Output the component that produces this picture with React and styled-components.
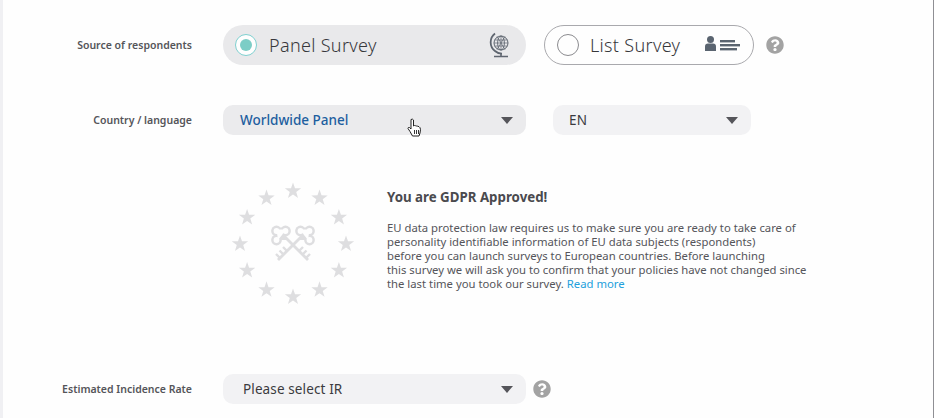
import React from "react";
import styled, { createGlobalStyle } from "styled-components";
import { FaQuestionCircle } from "react-icons/fa";

const Global = createGlobalStyle`
  html, body { margin: 0; padding: 0; background: #fefefe; }
  body { font-family: "Noto Sans", "Open Sans", sans-serif; }
`;

const Page = styled.div`
  width: 934px;
  height: 418px;
  box-sizing: border-box;
  overflow: hidden;
  padding-top: 25px;
  background: #fefefe;
  border-left: 3px solid #f0f0f3;
  border-right: 1px solid #8f8f94;
`;

const Row = styled.div`
  display: grid;
  grid-template-columns: 189px auto;
  column-gap: 31px;
  align-items: center;
  justify-content: start;
  margin-top: ${(p) => p.$top || 0}px;
`;

const Label = styled.label`
  font-size: 10.5px;
  font-weight: 600;
  color: #55555a;
  text-align: right;
  white-space: nowrap;
`;

const Controls = styled.div`
  display: flex;
  align-items: center;
`;

const Pill = styled.div`
  box-sizing: border-box;
  width: ${(p) => p.$w}px;
  height: 40px;
  margin-right: ${(p) => p.$right || 0}px;
  display: flex;
  align-items: center;
  padding: 0 ${(p) => p.$pr}px 0 ${(p) => p.$pl}px;
  border-radius: 20px;
  background: ${(p) => (p.$on ? "#e9e9eb" : "#fefefe")};
  border: ${(p) => (p.$on ? "none" : "1px solid #a9a9ad")};
`;

const Radio = styled.span`
  box-sizing: border-box;
  width: 22px;
  height: 22px;
  flex: none;
  border-radius: 50%;
  display: flex;
  align-items: center;
  justify-content: center;
  background: #fefefe;
  border: 1px solid ${(p) => (p.$on ? "#7fd0d0" : "#8b8b8f")};

  &::after {
    content: "";
    display: ${(p) => (p.$on ? "block" : "none")};
    width: 12px;
    height: 12px;
    border-radius: 50%;
    background: #7ccdc6;
  }
`;

const PillText = styled.span`
  flex: 1;
  margin-left: ${(p) => p.$gap}px;
  font-size: 18px;
  letter-spacing: 0.32px;
  font-weight: 300;
  color: #37373b;
  white-space: nowrap;
`;

const Help = styled(FaQuestionCircle)`
  width: 18px;
  height: 18px;
  color: #a3a3a3;
  flex: none;
`;

const Select = styled.div`
  position: relative;
  box-sizing: border-box;
  width: ${(p) => p.$w}px;
  height: 30px;
  margin-right: ${(p) => p.$right || 0}px;
  padding: 0 13px 0 ${(p) => p.$pl}px;
  display: flex;
  align-items: center;
  justify-content: space-between;
  border-radius: 10px;
  background: ${(p) => (p.$dark ? "#ebebed" : "#f2f2f4")};
  font-size: 13.5px;
  letter-spacing: ${(p) => (p.$blue ? 0 : 0.12)}px;
  font-weight: ${(p) => (p.$blue ? 500 : 400)};
  color: ${(p) => (p.$blue ? "#1d5e9f" : "#3a3a3e")};
`;

const Caret = styled.span`
  width: 0;
  height: 0;
  border-left: 6.5px solid transparent;
  border-right: 6.5px solid transparent;
  border-top: 7px solid #55555a;
`;

const Cursor = styled.svg`
  position: absolute;
  left: 184px;
  top: 13px;
  width: 17px;
  height: 20px;
`;

const Gdpr = styled.section`
  display: flex;
  align-items: flex-start;
  margin: 47px 0 0 229px;
`;

const Emblem = styled.svg`
  width: 124px;
  height: 124px;
  flex: none;
`;

const Copy = styled.div`
  margin: 7px 0 0 31px;
  color: #55555a;
`;

const Title = styled.h3`
  margin: 0 0 15px;
  font-size: 13.3px;
  line-height: 17px;
  font-weight: 700;
  color: #4a4a4e;
`;

const Text = styled.p`
  margin: 0;
  font-size: 11.3px;
  line-height: 14px;
  white-space: nowrap;
`;

const More = styled.a`
  color: #22a0dc;
`;

const Star = ({ cx, cy }) => {
  const pts = [];
  for (let i = 0; i < 10; i++) {
    const r = i % 2 ? 3.4 : 8.6;
    const a = (Math.PI / 5) * i - Math.PI / 2;
    pts.push(`${(cx + r * Math.cos(a)).toFixed(2)},${(cy + r * Math.sin(a)).toFixed(2)}`);
  }
  return <polygon points={pts.join(" ")} fill="#dedee0" />;
};

// one key of the crossed pair, the other is its mirror image
const Key = ({ flip }) => (
  <g transform={flip ? "translate(122 0) scale(-1 1)" : undefined}>
    <g fill="#dedee0">
      <circle cx="44.5" cy="49" r="5.4" />
      <circle cx="53.5" cy="49" r="5.4" />
      <circle cx="44.5" cy="58" r="5.4" />
      <rect x="46" y="50" width="8" height="8" />
    </g>
    <g fill="#fefefe">
      <circle cx="44.5" cy="49" r="2.9" />
      <circle cx="53.500" cy="49" r="2.9" />
      <circle cx="44.500" cy="58" r="2.9" />
      <path d="M44.500 47.500 L53.500 47.500 L50 53 L46 58 Z" />
    </g>
    <g fill="none" stroke="#dedee0">
      <path d="M52 54 L76 78" strokeWidth="2.8" />
      <path d="M67 69 L71 65 M70.500 72.500 L74.500 68.500 M74 76 L78 72" strokeWidth="2.4" />
    </g>
  </g>
);

const App = () => {
  const stars = Array.from({ length: 12 }, (_, i) => {
    const a = (Math.PI / 6) * i;
    return { cx: 61 + 53 * Math.cos(a), cy: 62 + 53 * Math.sin(a) };
  });

  return (
    <Page>
      <Global />
      <Row>
        <Label>Source of respondents</Label>
        <Controls>
          <Pill $on $w={303} $right={18} $pl={12} $pr={15}>
            <Radio $on />
            <PillText $gap={12}>Panel Survey</PillText>
            <svg width="22" height="26" viewBox="0 0 22 26" fill="none" stroke="#5f6670">
              <circle cx="12" cy="11" r="7" strokeWidth="1" />
              <ellipse cx="12" cy="11" rx="3.4" ry="7" strokeWidth="0.9" />
              <path d="M5.500 8h13M5 11h14M5.500 14h13M12 4v14M8 4.500l8 13M16 4.500l-8 13" strokeWidth="0.7" />
              <path d="M6 1.500A11 11 0 0 0 6 19a10 10 0 0 0 7 2.600" strokeWidth="1.800" />
              <path d="M12 21v3M5 24.500h14" strokeWidth="1.600" />
            </svg>
          </Pill>
          <Pill $w={210} $right={12} $pl={12} $pr={12}>
            <Radio />
            <PillText $gap={11}>List Survey</PillText>
            <svg width="38" height="18" viewBox="0 0 38 18" fill="#5a6470">
              <circle cx="7.500" cy="3.500" r="3.500" />
              <path d="M2 15v-4.500q0-3 3-3h5q3 0 3 3V15z" />
              <rect x="17" y="4" width="15" height="2.400" />
              <rect x="17" y="8" width="20" height="2.400" />
              <rect x="17" y="12" width="17" height="2.400" />
            </svg>
          </Pill>
          <Help />
        </Controls>
      </Row>

      <Row $top={40}>
        <Label>Country / language</Label>
        <Controls>
          <Select $w={303} $right={27} $pl={17} $dark $blue>
            Worldwide Panel
            <Caret />
            <Cursor viewBox="0 0 17 20">
              <path
                d="M4 1.500q1.500-1 2.500 0.500V8l1-.5 1 .2 1 .3 1.200.2 1.300.5 1 1 .5 2-.5 3.300-1 3H5.500L3 13.500 1 10.500q0-1.500 1.500-1L4 11z"
                fill="#fff"
                stroke="#222"
                strokeWidth="1"
              />
              <path d="M7.500 12v4M9.500 12v4M11.500 12v4" stroke="#222" strokeWidth="0.9" />
            </Cursor>
          </Select>
          <Select $w={198} $pl={16}>
            EN
            <Caret />
          </Select>
        </Controls>
      </Row>

      <Gdpr>
        <Emblem viewBox="0 0 124 124">
          {stars.map((s, i) => (
            <Star key={i} cx={s.cx} cy={s.cy} />
          ))}
          <Key />
          <Key flip />
        </Emblem>
        <Copy>
          <Title>You are GDPR Approved!</Title>
          <Text>
            EU data protection law requires us to make sure you are ready to take care of
            <br />
            personality identifiable information of EU data subjects (respondents)
            <br />
            before you can launch surveys to European countries. Before launching
            <br />
            this survey we will ask you to confirm that your policies have not changed since
            <br />
            the last time you took our survey. <More>Read more</More>
          </Text>
        </Copy>
      </Gdpr>

      <Row $top={68}>
        <Label>Estimated Incidence Rate</Label>
        <Controls>
          <Select $w={303} $right={7} $pl={20}>
            Please select IR
            <Caret />
          </Select>
          <Help />
        </Controls>
      </Row>
    </Page>
  );
};

export default App;
